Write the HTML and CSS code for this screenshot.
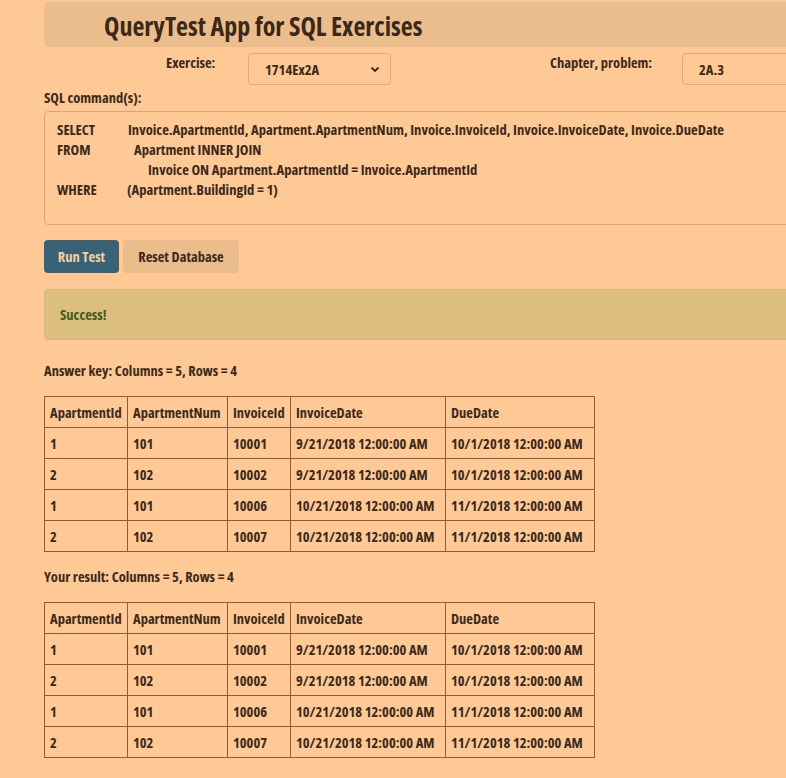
FILE: index.html
```html
<!DOCTYPE html>
<html>
<head>
<meta charset="utf-8">
<link rel="stylesheet" href="styles.css">
</head>
<body>
<div class="page">
  <div class="header"><h1 class="title">QueryTest App for SQL Exercises</h1></div>
  <div class="controls">
    <span class="label label-ex">Exercise:</span>
    <div class="select"><span>1714Ex2A</span>
      <svg class="chev" width="10" height="7" viewBox="0 0 10 7"><path d="M1.5 1.5 L5 5 L8.5 1.5" fill="none" stroke="#3b2a1c" stroke-width="1.8"/></svg>
    </div>
    <span class="label label-ch">Chapter, problem:</span>
    <div class="input">2A.3</div>
  </div>
  <div class="sql-label">SQL command(s):</div>
  <div class="sql">
    <div class="line"><span class="kw">SELECT</span><span>Invoice.ApartmentId, Apartment.ApartmentNum, Invoice.InvoiceId, Invoice.InvoiceDate, Invoice.DueDate</span></div>
    <div class="line"><span class="kw">FROM</span><span class="ind1">Apartment INNER JOIN</span></div>
    <div class="line"><span class="kw"></span><span class="ind2">Invoice ON Apartment.ApartmentId = Invoice.ApartmentId</span></div>
    <div class="line"><span class="kw">WHERE</span><span class="ind0">(Apartment.BuildingId = 1)</span></div>
  </div>
  <div class="buttons">
    <button class="btn btn-run">Run Test</button>
    <button class="btn btn-reset">Reset Database</button>
  </div>
  <div class="alert">Success!</div>
  <div class="caption">Answer key: Columns = 5, Rows = 4</div>
  <table class="grid">
    <tr><th class="c1">ApartmentId</th><th class="c2">ApartmentNum</th><th class="c3">InvoiceId</th><th class="c4">InvoiceDate</th><th class="c5">DueDate</th></tr>
    <tr><td>1</td><td>101</td><td>10001</td><td>9/21/2018 12:00:00 AM</td><td>10/1/2018 12:00:00 AM</td></tr>
    <tr><td>2</td><td>102</td><td>10002</td><td>9/21/2018 12:00:00 AM</td><td>10/1/2018 12:00:00 AM</td></tr>
    <tr><td>1</td><td>101</td><td>10006</td><td>10/21/2018 12:00:00 AM</td><td>11/1/2018 12:00:00 AM</td></tr>
    <tr><td>2</td><td>102</td><td>10007</td><td>10/21/2018 12:00:00 AM</td><td>11/1/2018 12:00:00 AM</td></tr>
  </table>
  <div class="caption">Your result: Columns = 5, Rows = 4</div>
  <table class="grid">
    <tr><th class="c1">ApartmentId</th><th class="c2">ApartmentNum</th><th class="c3">InvoiceId</th><th class="c4">InvoiceDate</th><th class="c5">DueDate</th></tr>
    <tr><td>1</td><td>101</td><td>10001</td><td>9/21/2018 12:00:00 AM</td><td>10/1/2018 12:00:00 AM</td></tr>
    <tr><td>2</td><td>102</td><td>10002</td><td>9/21/2018 12:00:00 AM</td><td>10/1/2018 12:00:00 AM</td></tr>
    <tr><td>1</td><td>101</td><td>10006</td><td>10/21/2018 12:00:00 AM</td><td>11/1/2018 12:00:00 AM</td></tr>
    <tr><td>2</td><td>102</td><td>10007</td><td>10/21/2018 12:00:00 AM</td><td>11/1/2018 12:00:00 AM</td></tr>
  </table>
</div>
</body>
</html>
```
FILE: styles.css
```css
html, body {
  margin: 0;
  padding: 0;
  background: #ffc996;
  overflow: hidden;
}
body {
  font-family: "Open Sans", sans-serif;
  font-stretch: 75%;
  font-weight: bold;
  color: #3b2a1c;
  font-size: 14.5px;
}
.page {
  padding: 2px 0 0 44px;
  width: 820px;
}
.header {
  background: #ebbd8c;
  height: 45px;
  border-radius: 5px 0 0 5px;
  display: flex;
  align-items: center;
  padding-left: 60px;
  box-sizing: border-box;
  padding-top: 3px;
}
.title {
  margin: 0;
  font-size: 26px;
  font-weight: bold;
  color: #3a2818;
}
.controls {
  display: flex;
  align-items: flex-start;
  margin-top: 6px;
  height: 32px;
  white-space: nowrap;
}
.controls > * { flex: none; }
.label {
  padding-top: 0;
}
.label-ex { margin-left: 122px; width: 82px; }
.select {
  height: 30px;
  border: 1px solid #e2aa72;
  border-radius: 4px;
  display: flex;
  align-items: center;
  justify-content: space-between;
  padding: 0 10px 0 16px;
  width: 115px;
}
.label-ch { margin-left: 159px; width: 132px; }
.input {
  width: 200px;
  height: 30px;
  border: 1px solid #e2aa72;
  border-radius: 4px;
  padding-left: 16px;
  display: flex;
  align-items: center;
}
.sql-label {
  margin-top: 2px;
  height: 21px;
  line-height: 21px;
}
.sql {
  border: 1px solid #dca472;
  border-radius: 4px 0 0 4px;
  padding: 7px 0 0 12px;
  box-sizing: border-box;
  height: 114px;
  margin-top: 3px;
}
.line {
  display: flex;
  height: 20px;
  line-height: 20px;
  white-space: nowrap;
  font-size: 14.6px;
}
.kw { width: 71px; flex: none; }
.ind1 { margin-left: 6px; }
.ind2 { margin-left: 20px; }
.ind0 { margin-left: -1px; }
.buttons {
  display: flex;
  gap: 4px;
  margin-top: 15px;
}
.btn {
  font-family: inherit;
  font-stretch: inherit;
  font-weight: bold;
  font-size: 14.5px;
  height: 33px;
  border: none;
  border-radius: 4px;
  padding: 0;
  white-space: nowrap;
}
.btn-run {
  background: #3a6276;
  color: #f5d0a4;
  width: 75px;
}
.btn-reset {
  background: #ebbd8c;
  color: #3b2a1c;
  width: 116px;
}
.alert {
  margin-top: 16px;
  height: 51px;
  box-sizing: border-box;
  background: #dcbf80;
  border: 1px solid #d6b676;
  border-radius: 4px 0 0 4px;
  color: #3f5c17;
  display: flex;
  align-items: center;
  padding-left: 15px;
}
.caption {
  margin-top: 20px;
  height: 22px;
  line-height: 22px;
}
.grid {
  border-collapse: collapse;
  margin-top: 14px;
  width: 550px;
  table-layout: fixed;
}
.grid th, .grid td {
  box-sizing: border-box;
  border: 1px solid #8c5b37;
  height: 31px;
  padding: 0 5px;
  text-align: left;
  white-space: nowrap;
}
.c1 { width: 83px; }
.c2 { width: 100px; }
.c3 { width: 63px; }
.c4 { width: 155px; }
.c5 { width: 149px; }
.grid + .caption { margin-top: 14px; }
```
